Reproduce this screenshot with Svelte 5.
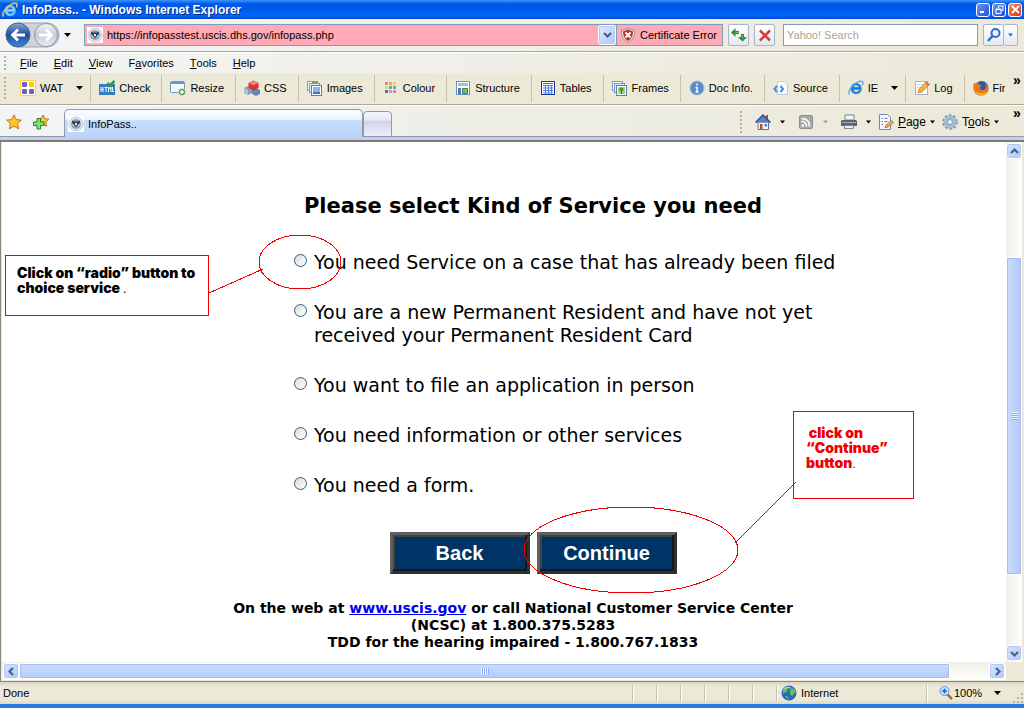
<script lang="ts">
    /* browser chrome */
    let address = $state('https://infopasstest.uscis.dhs.gov/infopass.php');
    let search = $state('');

    const menus = [
        ['', 'F', 'ile'],
        ['', 'E', 'dit'],
        ['', 'V', 'iew'],
        ['F', 'a', 'vorites'],
        ['', 'T', 'ools'],
        ['', 'H', 'elp'],
    ];

    const tools = [
        { icon: 'wat', label: 'WAT', drop: true },
        { icon: 'check', label: 'Check' },
        { icon: 'resize', label: 'Resize' },
        { icon: 'css', label: 'CSS' },
        { icon: 'images', label: 'Images' },
        { icon: 'colour', label: 'Colour' },
        { icon: 'structure', label: 'Structure' },
        { icon: 'tables', label: 'Tables' },
        { icon: 'frames', label: 'Frames' },
        { icon: 'info', label: 'Doc Info.' },
        { icon: 'source', label: 'Source' },
        { icon: 'ie', label: 'IE', drop: true },
        { icon: 'log', label: 'Log' },
        { icon: 'firefox', label: 'Fir' },
    ];

    const swatches = ['#f08080', '#f4a060', '#f0d060', '#c8e0a0', '#50c060', '#50b0e0', '#5070b0', '#d090d8', '#ff70a8'];

    /* service form */
    let service = $state('');

    const services = [
        { id: 'case', text: 'You need Service on a case that has already been filed' },
        { id: 'resident', text: 'You are a new Permanent Resident and have not yet received your Permanent Resident Card' },
        { id: 'person', text: 'You want to file an application in person' },
        { id: 'info', text: 'You need information or other services' },
        { id: 'form', text: 'You need a form.' },
    ];
</script>

{#snippet arrow()}
    <svg class="arrow" width="7" height="4" viewBox="0 0 7 4"><path d="M0 0h7L3.500 4z" fill="currentColor" /></svg>
{/snippet}

{#snippet chevron(turn: number)}
    <svg width="9" height="9" viewBox="0 0 9 9">
        <path d="M1 3l3.500 3.500L8 3" fill="none" stroke="#4d6185" stroke-width="2.200" transform="rotate({turn} 4.500 4.500)" />
    </svg>
{/snippet}

{#snippet icon(name: string)}
    <svg class="icon" width="16" height="16" viewBox="0 0 16 16">
        {#if name === 'wat'}
            <path d="M.5.5h15v15H.500z" fill="#fffdf0" stroke="#f4d24c" />
            <rect x="2" y="2" width="5" height="5" rx="1" fill="#7060c8" />
            <rect x="9" y="2" width="5" height="5" rx="1" fill="#ffcc00" />
            <rect x="2" y="9" width="5" height="5" rx="1" fill="#7060c8" />
            <rect x="9" y="9" width="5" height="5" rx="1" fill="#7060c8" />
        {:else if name === 'check'}
            <rect x="0" y="4" width="16" height="11" fill="#2f7fc4" />
            <path d="M2 7v5M2 9.500h2M4 7v5M5.500 7.500h3M7 7v5M9.500 12V7l1.200 2L12 7v5M13.500 7v4.500H15" fill="none" stroke="#fff" />
            <path d="M8.500 3l2.500 2.500L15.500 1" fill="none" stroke="#2e9a3a" stroke-width="2.500" />
        {:else if name === 'resize'}
            <rect x=".5" y="1.500" width="14" height="11" rx="1" fill="#f4f9ff" stroke="#7795b8" />
            <path d="M1 2h13v2H1z" fill="#5c9ade" />
            <circle cx="12" cy="12" r="3.500" fill="#4c9c3c" stroke="#fff" stroke-width=".5" />
            <path d="M10 12h4M12 10v4" stroke="#fff" stroke-width="1.300" />
        {:else if name === 'css'}
            <path d="M0 8l4-2 4 2v5l-4 2-4-2z" fill="#8c9cb0" />
            <path d="M8 10l4-2 4 2v4l-4 2-4-2z" fill="#6388b8" />
            <path d="M4.500 3L9.500.5l5 2.500v5L9.500 10.500 4.500 8z" fill="#d83038" />
            <path d="M4.500 3L9.500.5l5 2.500-5 2.500z" fill="#f08078" />
            <path d="M0 8l4 2v5l-4-2z" fill="#b4c0d0" />
        {:else if name === 'images' || name === 'frames'}
            <rect x=".5" y="1.500" width="10" height="9" fill="#f7fbff" stroke="#7b9bc2" />
            <rect x="2.500" y="3.500" width="10" height="9" fill="#dfeafa" stroke="#7b9bc2" />
            <rect x="4.500" y="5.500" width="10" height="10" fill="#fff" stroke="#5580b0" />
            <rect x="6" y="7" width="7" height="7" fill={name === 'images' ? '#8ab8ec' : '#a8d078'} />
            {#if name === 'images'}
                <path d="M5 2h5v1H5z" fill="#5ba34a" />
                <path d="M6 12h7v2H6z" fill="#3c78b8" />
            {:else}
                <circle cx="9.500" cy="9.500" r="2" fill="#3f9a2c" />
                <path d="M9 11h1v3H9z" fill="#70501c" />
            {/if}
        {:else if name === 'colour'}
            {#each swatches as fill, i}
                <rect x={2 + (i % 3) * 4} y={2 + Math.floor(i / 3) * 4} width="3" height="3" {fill} />
            {/each}
        {:else if name === 'structure'}
            <rect x="1.500" y="1.500" width="13" height="13" fill="#fff" stroke="#6a90c0" />
            <path d="M3 3h10v3H3z" fill="#9cc0e8" />
            <path d="M3 8h3v6H3z" fill="#4a78b8" />
            <path d="M7.500 8.500h5v5h-5z" fill="#70c060" stroke="#3a8838" />
        {:else if name === 'tables'}
            <rect x="1.500" y="1.500" width="13" height="13" fill="#fff" stroke="#1c3c98" />
            <path d="M3 3.500h10" stroke="#3c8c3c" />
            <path d="M3 5.500h10M3 8h10M3 10.500h10M3 13h10M5.500 5v8.500M8.500 5v8.500M11.500 5v8.500" stroke="#4f7de4" />
        {:else if name === 'info'}
            <circle cx="8" cy="8" r="7" fill="#5a8cc8" stroke="#a4bcd8" />
            <path d="M8 3.500v2M8 7v5.500M6.500 7.500H8M6.500 12h3" stroke="#fff" stroke-width="1.500" />
        {:else if name === 'source'}
            <path d="M4.500 1.500h7l3 3v10h-10z" fill="#f8fbff" stroke="#c0ccdc" />
            <path d="M4 6L1.500 9 4 12M7.500 6L10 9l-2.500 3" fill="none" stroke="#4290dc" stroke-width="2" />
        {:else if name === 'ie'}
            <path d="M13.500 9.500H5.500c.3 3 4 3.500 5.300 1h2.500C11 15.500 3 15 3 8.500 3 1.500 13.500 1.500 13.500 9.500zM5.600 7.300h5.200c-.3-3-4.900-3-5.200 0z" fill="#1a7fd8" stroke="#1a7fd8" stroke-width=".6" />
            <path d="M1.500 14.500C-1.500 10 10-.5 14.500 1.500c1 .7.600 2.300-.3 4" fill="none" stroke="#4aa6ec" stroke-width="1.300" />
        {:else if name === 'title'}
            <path d="M13.500 9.500H5.500c.3 3 4 3.500 5.300 1h2.500C11 15.500 3 15 3 8.500 3 1.500 13.500 1.500 13.500 9.500zM5.600 7.300h5.200c-.3-3-4.900-3-5.200 0z" fill="#7cd0ff" stroke="#7cd0ff" stroke-width=".6" />
            <path d="M1.500 14.500C-1.500 10 10-.5 14.500 1.500c1 .7.600 2.300-.3 4" fill="none" stroke="#f0c848" stroke-width="1.500" />
        {:else if name === 'log'}
            <path d="M1.500 1.500h12v13h-12z" fill="#fff" stroke="#a8b0b8" />
            <path d="M3 4.500h8M3 7.500h8" stroke="#d0d8e0" />
            <path d="M4 13l1-4 7.500-7.500 3 3L8 12z" fill="#f5b23c" stroke="#c07c20" stroke-width=".7" />
            <path d="M12.500 1.500l3 3-1.500 1.500-3-3z" fill="#e86c5c" />
        {:else if name === 'firefox'}
            <circle cx="8.500" cy="8" r="7" fill="#2c58a8" />
            <path d="M1 3c2 1 3-1 5-.5C4 4.500 8 5 9 6c-2 0-3 2-1 3.500 2 1.200 4 0 5-1.500 0-3-1-4.500-2-5.500 6 2.500 6 12-2 13C1 16-1 8 1 3z" fill="#e87818" />
            <path d="M2 10c2 4 8 5 12 1-2 5-10 6-12-1z" fill="#fbc03c" />
        {:else if name === 'seal'}
            <rect width="16" height="16" fill="#fff" />
            <circle cx="8" cy="8" r="7" fill="#dcdfe4" stroke="#c0c4cc" stroke-dasharray="2 1" />
            <circle cx="8" cy="8" r="4.800" fill="#7c9cb8" />
            <path d="M4 4.500l3 1.500 1-1 1 1 3-1.500v2L10 9.500 8 11 6 9.500 4 6.500z" fill="#2a4266" />
            <path d="M4.500 8l2 2.500M11.500 8l-2 2.500" stroke="#f0f4f8" />
            <path d="M7 7h2v2H7z" fill="#e4e8ee" />
            <path d="M7 9h2v1.500H7z" fill="#a05058" />
        {:else if name === 'shield'}
            <path d="M1.500 3Q5 3 8 .7 11 3 14.500 3C15 9 12 14 8 15.400 4 14 1 9 1.500 3z" fill="#e4e4e0" stroke="#98948c" />
            <path d="M3 4.300Q6 4 8 2.300 10 4 13 4.300C13 9 11 12.500 8 14 5 12.500 3 9 3 4.300z" fill="#c82c2c" />
            <path d="M5.500 5.500l5 5M10.500 5.500l-5 5" stroke="#fff" stroke-width="2" />
        {:else if name === 'refresh'}
            <path d="M0 5.500L4.500 1v3H8v3H4.500v3z" fill="#2c9238" />
            <path d="M16 10l-4.500 4.500L7 10h3V7h3v3z" fill="#2c8a38" />
            <path d="M4.500 5.500H8M11.500 8v4" fill="none" stroke="#68b868" />
        {:else if name === 'stop'}
            <path d="M3 3.500l10 10M13 3.500l-10 10" stroke="#d63c34" stroke-width="2.500" />
        {:else if name === 'find'}
            <circle cx="9.500" cy="6" r="4" fill="#e8f4ff" stroke="#2f6bd0" stroke-width="2" />
            <path d="M6.500 9L2 14" stroke="#2f6bd0" stroke-width="2.500" />
        {:else if name === 'star'}
            <path d="M8 .8l2.200 4.800 5.200.5-3.900 3.500 1.200 5.300L8 12.200l-4.700 2.700 1.200-5.300L.6 6.100l5.200-.5z" fill="#ffc42e" stroke="#bb7a18" />
        {:else if name === 'addstar'}
            <path d="M10 1l1.800 3.700 4 .5-3 2.800.8 4.200L10 10.200l-3.600 2L7 8 4.200 5.200l4-.5z" fill="#ffc42e" stroke="#bb7a18" />
            <path d="M4 4.500h3.500V8H11v3.500H7.500V15H4v-3.500H.5V8H4z" fill="#84e070" stroke="#258428" />
        {:else if name === 'home'}
            <path d="M11 1h2v5h-2z" fill="#b84838" />
            <path d="M3 8h10.500v7.500H3z" fill="#f4f6fa" stroke="#5c74a4" />
            <path d="M.5 8.500L8 1l7.500 7.500" fill="#5e7fb8" stroke="#34548c" stroke-width="1.500" />
            <path d="M5 10h2.500v5.500H5z" fill="#a05828" />
            <path d="M9.500 10h2.500v2.500H9.500z" fill="#4878c8" />
        {:else if name === 'feed'}
            <rect x="1.500" y="1.500" width="13" height="13" rx="1" fill="#a8a8a4" stroke="#8c8c88" />
            <circle cx="4.800" cy="11.500" r="1.300" fill="#fff" />
            <path d="M3.500 7.500q5 0 5 5M3.500 4.500q8 0 8 8" fill="none" stroke="#fff" stroke-width="1.500" />
        {:else if name === 'print'}
            <path d="M4 1h9v5H4z" fill="#f4f8fc" stroke="#7c8490" />
            <path d="M1 6h14l1 1v5H0V7z" fill="#5c626c" />
            <path d="M1 8h14v1H1z" fill="#a8b0b8" />
            <path d="M3.500 11.500h9v3h-9z" fill="#e4ecf8" stroke="#80889c" />
        {:else if name === 'page'}
            <path d="M1.500.5h8l3 3v12h-11z" fill="#f6f8fc" stroke="#7088b0" />
            <path d="M3.500 4.500H5M6.500 4.500h3M3.500 7.500H5M6.500 7.500h3M3.500 10.500H5" stroke="#6080b0" />
            <path d="M7 14l1-3 5.500-4.500 2 2L10 13z" fill="#f0ae50" stroke="#8c7440" stroke-width=".8" />
        {:else if name === 'gear'}
            <circle cx="8" cy="8" r="6.500" fill="none" stroke="#7895b8" stroke-width="2.500" stroke-dasharray="2.500 1.600" />
            <circle cx="8" cy="8" r="4.500" fill="none" stroke="#a4bcd8" stroke-width="3.500" />
            <circle cx="8" cy="8" r="2.500" fill="#f4f4ec" stroke="#7895b8" />
        {:else if name === 'globe'}
            <circle cx="8" cy="8" r="7.500" fill="#2c66c0" />
            <path d="M2 4c2-3 5-3 6-2 0 2-2 2-2 4s-3 1-4 3zM9 5c2-3 4-2 5.500 1 0 3-2 2-3 5-2 0-3-3-2.500-6zM4 11c2-1 3 1 4 3-2 0-3-1-4-3z" fill="#66c050" />
            <path d="M3 4q3-3 7-1" fill="none" stroke="#b4dcf8" />
        {:else if name === 'zoom'}
            <path d="M9 9l5 5" stroke="#9c7048" stroke-width="2.500" />
            <circle cx="6.500" cy="6" r="4.500" fill="#d4eaff" stroke="#6090c8" />
            <path d="M4 6h5M6.500 3.500v5" stroke="#1c64d0" stroke-width="1.600" />
        {/if}
    </svg>
{/snippet}

<div class="window">
    <header class="titlebar">
        {@render icon('title')}
        <span class="title">InfoPass.. - Windows Internet Explorer</span>
        <button class="winbtn" aria-label="Minimize">
            <svg width="9" height="9" viewBox="0 0 9 9"><path d="M1 7h4" stroke="#fff" stroke-width="2" /></svg>
        </button>
        <button class="winbtn" aria-label="Restore">
            <svg width="9" height="9" viewBox="0 0 9 9"><path d="M3.500 3V1H8v4.500H6M1 4h5v4.500H1zM1 4.500h5" fill="none" stroke="#fff" /></svg>
        </button>
        <button class="winbtn close" aria-label="Close">
            <svg width="9" height="9" viewBox="0 0 9 9"><path d="M1 1l7 7M8 1L1 8" stroke="#fff" stroke-width="1.800" /></svg>
        </button>
    </header>

    <div class="navbar">
        <button class="travel" aria-label="Back and forward">
            <svg width="55" height="28" viewBox="0 0 55 28">
                <defs>
                    <linearGradient id="back" x1="0" y1="0" x2="0" y2="1">
                        <stop offset="0" stop-color="#88a8d8" />
                        <stop offset=".5" stop-color="#1d4c9c" />
                        <stop offset="1" stop-color="#3c8ce0" />
                    </linearGradient>
                    <linearGradient id="fwd" x1="0" y1="0" x2="0" y2="1">
                        <stop offset="0" stop-color="#f4f6fa" />
                        <stop offset=".5" stop-color="#c4cad8" />
                        <stop offset="1" stop-color="#e8f0f8" />
                    </linearGradient>
                </defs>
                <rect x="1" y="2" width="53" height="24" rx="12" fill="#d0d4da" stroke="#a0a6b0" />
                <circle cx="13" cy="14" r="12" fill="url(#back)" stroke="#4c648c" />
                <circle cx="41" cy="14" r="11.500" fill="url(#fwd)" stroke="#8c96a8" />
                <path d="M20 14H8M13 8.500L7.500 14l5.500 5.500" fill="none" stroke="#fff" stroke-width="2.800" />
                <path d="M34 14h12M41 8.500l5.500 5.500-5.500 5.500" fill="none" stroke="#fff" stroke-width="2.800" />
            </svg>
        </button>
        {@render arrow()}
        <div class="address">
            {@render icon('seal')}
            <input aria-label="Address" bind:value={address} />
            <button class="drop" aria-label="Show addresses">{@render chevron(0)}</button>
        </div>
        <button class="cert">{@render icon('shield')} Certificate Error</button>
        <button class="square" aria-label="Refresh">{@render icon('refresh')}</button>
        <button class="square" aria-label="Stop">{@render icon('stop')}</button>
        <input class="search" placeholder="Yahoo! Search" aria-label="Search" bind:value={search} />
        <div class="findgroup">
            <button class="square" aria-label="Go">{@render icon('find')}</button>
            <button class="square narrow" aria-label="Search options">{@render arrow()}</button>
        </div>
    </div>

    <nav class="menubar">
        <i class="grip"></i>
        {#each menus as [before, key, after]}
            <button>{before}<u>{key}</u>{after}</button>
        {/each}
    </nav>

    <div class="toolbar">
        <i class="grip"></i>
        <div class="tools">
            {#each tools as tool}
                <button>
                    {@render icon(tool.icon)}
                    {tool.label}
                    {#if tool.drop}<span class="more">{@render arrow()}</span>{/if}
                </button>
            {/each}
        </div>
        <span class="overflow">»</span>
    </div>

    <div class="tabrow">
        <button class="fav" aria-label="Favorites Center">{@render icon('star')}</button>
        <button class="fav" aria-label="Add to Favorites">{@render icon('addstar')}</button>
        <button class="tab">{@render icon('seal')} InfoPass..</button>
        <button class="newtab" aria-label="New Tab"></button>
        <div class="commands">
            <i class="grip"></i>
            <button class="spaced" aria-label="Home">{@render icon('home')}{@render arrow()}</button>
            <button class="spaced off" aria-label="Feeds">{@render icon('feed')}{@render arrow()}</button>
            <button aria-label="Print">{@render icon('print')}{@render arrow()}</button>
            <button class="named">{@render icon('page')}<span><u>P</u>age</span>{@render arrow()}</button>
            <button class="named">{@render icon('gear')}<span>T<u>o</u>ols</span>{@render arrow()}</button>
        </div>
        <span class="overflow">»</span>
    </div>

    <div class="viewport">
        <main>
            <form>
                <h1>Please select Kind of Service you need</h1>
                <div class="services">
                    {#each services as s}
                        <label>
                            <input type="radio" name="service" value={s.id} bind:group={service} />
                            <span>{s.text}</span>
                        </label>
                    {/each}
                </div>
                <div class="actions">
                    <button type="button">Back</button>
                    <button type="button">Continue</button>
                </div>

                <!-- instructions drawn over the form -->
                <svg class="marks" width="912" height="519" viewBox="0 0 912 519">
                    <g fill="none" stroke="#f00000" shape-rendering="crispEdges">
                        <ellipse cx="295" cy="120" rx="41" ry="27" />
                        <path d="M204 151L258 127" />
                        <ellipse cx="626" cy="408" rx="107" ry="43" />
                        <path d="M730 401L791 340" stroke="#a02020" />
                    </g>
                </svg>
                <p class="note pick">Click on “radio” button to choice service <small>.</small></p>
                <p class="note go">&nbsp;click on “Continue” button<small>.</small></p>
            </form>
            <footer>
                On the web at <a href="#uscis">www.uscis.gov</a> or call National Customer Service Center (NCSC) at 1.800.375.5283<br />
                TDD for the hearing impaired - 1.800.767.1833
            </footer>
        </main>
        <div class="vscroll">
            <button aria-label="Scroll up">{@render chevron(180)}</button>
            <div class="track"><div class="thumb"><i></i></div></div>
            <button aria-label="Scroll down">{@render chevron(0)}</button>
        </div>
        <div class="hscroll">
            <button aria-label="Scroll left">{@render chevron(90)}</button>
            <div class="track"><div class="thumb"><i></i></div></div>
            <button aria-label="Scroll right">{@render chevron(270)}</button>
        </div>
    </div>

    <div class="status">
        <span class="done">Done</span>
        {#each Array(6) as _}
            <span class="pane"></span>
        {/each}
        <span class="zone">{@render icon('globe')} Internet</span>
        <button class="level">{@render icon('zoom')} 100% <span class="more">{@render arrow()}</span></button>
        <svg class="sizer" width="12" height="12" viewBox="0 0 12 12">
            <path d="M9 1h2v2H9zM5 5h2v2H5zM9 5h2v2H9zM1 9h2v2H1zM5 9h2v2H5zM9 9h2v2H9z" fill="#b8b4a0" />
        </svg>
    </div>
</div>

<style>
    :global(body) {
        margin: 0;
    }

    .window {
        display: flex;
        flex-direction: column;
        height: 100vh;
        overflow: hidden;
        box-sizing: border-box;
        border-bottom: 4px solid #2878e0;
        background: #ece9d8;
        color: #000;
        font: 11px/14px "Liberation Sans", Arial, sans-serif;
    }

    .window * {
        box-sizing: border-box;
    }

    button {
        display: flex;
        align-items: center;
        flex: none;
        padding: 0;
        border: 0;
        background: none;
        color: inherit;
        font: inherit;
        white-space: nowrap;
    }

    svg {
        display: block;
        flex: none;
    }

    /* title */
    .titlebar {
        display: flex;
        align-items: center;
        gap: 2px;
        flex: none;
        height: 19px;
        padding: 0 2px;
        background: linear-gradient(#3c94fc, #0058e8 20%, #0058e8 45%, #0068ff 80%, #0048d0);
    }

    .title {
        flex: 1;
        padding-left: 2px;
        color: #fff;
        font-size: 12px;
        font-weight: bold;
        text-shadow: 1px 1px #0a2878;
    }

    .winbtn {
        justify-content: center;
        width: 14px;
        height: 14px;
        border: 1px solid #fff;
        border-radius: 3px;
        background: linear-gradient(135deg, #6c94f0, #2050d0);
    }

    .close {
        background: linear-gradient(135deg, #f08868, #d03c18);
    }

    /* address row */
    .navbar {
        display: flex;
        align-items: center;
        flex: none;
        height: 34px;
        padding: 0 6px 2px 5px;
        border-bottom: 1px solid #fff;
        background: linear-gradient(90deg, #f3f4f6, #f0efe8 50%, #ece9d8);
        box-shadow: inset 0 -1px #aca899;
    }

    .navbar > .arrow {
        margin: 0 13px 0 4px;
    }

    .address {
        display: flex;
        align-items: center;
        flex: 1;
        height: 22px;
        padding: 0 1px 0 2px;
        border: 1px solid #7f9db9;
        background: #ffaab6;
    }

    .address input {
        flex: 1;
        min-width: 0;
        padding: 0 4px;
        border: 0;
        background: none;
        font: inherit;
    }

    .drop {
        justify-content: center;
        width: 16px;
        height: 18px;
        border: 1px solid #b8cbf4;
        border-radius: 2px;
        outline: 1px solid #fff;
        background: linear-gradient(135deg, #dce8ff, #b4c8f8);
    }

    .cert {
        gap: 4px;
        width: 106px;
        height: 22px;
        padding-left: 3px;
        border: 1px solid #7f9db9;
        border-left: 0;
        background: #ffaab6;
    }

    .square {
        justify-content: center;
        width: 21px;
        height: 22px;
        margin-left: 5px;
        border: 1px solid #a8b4c8;
        border-radius: 2px;
        background: linear-gradient(#fff, #e4e8f2);
    }

    .search {
        width: 195px;
        height: 22px;
        margin-left: 8px;
        padding: 0 3px;
        border: 1px solid #7f9db9;
        background: #fff;
        font: inherit;
    }

    .search::placeholder {
        color: #a8a490;
        opacity: 1;
    }

    .findgroup {
        display: flex;
    }

    .narrow {
        width: 14px;
        margin-left: 0;
        border-left: 0;
        color: #1c64c8;
    }

    .narrow .arrow {
        width: 5px;
    }

    /* menu and developer toolbar */
    .grip {
        flex: none;
        width: 2px;
        height: 14px;
        margin: 0 6px 0 4px;
        background: repeating-linear-gradient(#b4b09c 0 2px, transparent 2px 4px);
    }

    .menubar {
        display: flex;
        align-items: center;
        flex: none;
        height: 20px;
        background: linear-gradient(90deg, #f3f4f4, #ece9d8);
    }

    .menubar button {
        padding: 0 8px;
    }

    .toolbar {
        display: flex;
        align-items: center;
        flex: none;
        height: 33px;
        padding-bottom: 2px;
        border-bottom: 1px solid #fff;
        background: #ece9d8;
        box-shadow: inset 0 -1px #aca899;
    }

    .toolbar .grip {
        height: 22px;
    }

    .tools {
        display: flex;
        flex: 1;
        min-width: 0;
        overflow: hidden;
    }

    .tools button {
        gap: 4px;
        height: 27px;
        padding: 0 11px 0 8px;
        border-right: 1px solid #c5c2b0;
    }

    .tools button:last-child {
        border-right: 0;
    }

    .more {
        padding: 0 0 0 9px;
    }

    .tools .more {
        margin-right: -4px;
    }

    .overflow {
        align-self: flex-start;
        width: 19px;
        padding-left: 8px;
        font: bold 14px/14px "Liberation Sans", Arial, sans-serif;
    }

    /* tabs */
    .tabrow {
        display: flex;
        align-items: flex-end;
        flex: none;
        height: 36px;
        border-bottom: 2px solid #7c7a70;
        background: linear-gradient(90deg, #f3f4f6, #eeeee6 50%, #ece9d8);
        box-shadow: inset 0 -3px #c0d0f4, inset 0 -4px #9498a8;
        padding-bottom: 3px;
    }

    .fav {
        height: 31px;
        padding-left: 6px;
        margin-right: 5px;
    }

    .tab {
        flex: 0 1 299px;
        gap: 4px;
        height: 28px;
        margin-left: 10px;
        padding-left: 3px;
        border: 1px solid #8c98b0;
        border-bottom: 0;
        border-radius: 5px 5px 0 0;
        background: linear-gradient(#fbfdff, #e8f4ff 35%, #c4e0fc 38%, #bcd4f8);
    }

    .newtab {
        width: 29px;
        height: 26px;
        border: 1px solid #9498a8;
        border-radius: 4px 4px 0 0;
        background: linear-gradient(#f4f4fa, #e4e6f2 35%, #d0d4e8 38%, #eceefa);
    }

    .commands {
        display: flex;
        align-items: center;
        gap: 7px;
        height: 31px;
        margin-left: auto;
    }

    .commands .grip {
        height: 22px;
        margin: 0 6px 0 0;
    }

    .commands button {
        gap: 9px;
    }

    .commands .spaced {
        padding-right: 6px;
    }

    .commands .named {
        gap: 4px;
        font-size: 12px;
    }

    .commands .arrow {
        width: 5px;
    }

    .off .arrow {
        opacity: 0.3;
    }

    .tabrow .overflow {
        margin-left: 6px;
    }

    /* document */
    .viewport {
        display: grid;
        grid-template: minmax(0, 1fr) 18px / minmax(0, 1fr) 16px;
        flex: 1;
        min-height: 0;
        padding: 0 2px 1px 1px;
        border-left: 1px solid #8c8978;
    }

    main {
        display: flex;
        flex-direction: column;
        align-items: center;
        overflow: hidden;
        padding: 53px 0 0 58px;
        background: #fff;
        font-family: "DejaVu Sans", Verdana, sans-serif;
    }

    form {
        position: relative;
        width: 630px;
        max-width: 100%;
    }

    h1 {
        margin: 0 0 33px;
        font-size: 21px;
        line-height: 23px;
        text-align: center;
    }

    .services {
        display: flex;
        flex-direction: column;
        gap: 27px;
        padding-left: 76px;
        font-size: 19px;
        line-height: 23px;
    }

    .services label {
        display: flex;
        align-items: flex-start;
        gap: 7px;
    }

    .services input {
        appearance: none;
        flex: none;
        width: 13px;
        height: 13px;
        margin: 3px 0;
        border: 1px solid #305c84;
        border-radius: 50%;
        background: linear-gradient(135deg, #dcdcd4, #fff);
    }

    .services input:checked {
        background: radial-gradient(#30a030 35%, #fff 40%);
    }

    .actions {
        display: flex;
        justify-content: center;
        gap: 7px;
        margin: 35px 0 26px;
    }

    .actions button {
        justify-content: center;
        width: 140px;
        height: 42px;
        border: 3px solid;
        border-color: #606060 #303030 #303030 #606060;
        background: #003366;
        box-shadow: inset -2px -2px #181818, inset 2px 2px #404040;
        color: #fff;
        font: bold 20px/23px "Liberation Sans", Arial, sans-serif;
    }

    .marks {
        position: absolute;
        top: -53px;
        left: -213px;
        pointer-events: none;
        overflow: visible;
    }

    .note {
        position: absolute;
        margin: 0;
        border: 1px solid #f00000;
        font: 900 14px/15px Inter, "Liberation Sans", sans-serif;
    }

    .note small {
        font-weight: 400;
    }

    .pick {
        top: 60px;
        left: -213px;
        width: 204px;
        height: 61px;
        padding: 9px 4px 0 11px;
        background: #fff;
    }

    .go {
        top: 216px;
        left: 575px;
        width: 121px;
        height: 88px;
        padding: 13px 16px 0 12px;
        color: #f00000;
    }

    footer {
        max-width: 570px;
        margin-right: 40px;
        font-size: 14px;
        font-weight: bold;
        line-height: 17px;
        text-align: center;
    }

    footer a {
        color: #0000ee;
    }

    /* scroll bars */
    .vscroll,
    .hscroll {
        display: flex;
        background: linear-gradient(90deg, #f0efe8, #fefefc);
    }

    .vscroll {
        flex-direction: column;
        padding: 1px 0;
    }

    .hscroll {
        padding: 1px;
        background: linear-gradient(#f0efe8, #fefefc);
    }

    .vscroll button,
    .hscroll button {
        justify-content: center;
        width: 16px;
        height: 16px;
        border: 1px solid #fff;
        border-radius: 3px;
        background: linear-gradient(135deg, #d8e4ff, #b0c8fc);
        box-shadow: inset 0 0 0 1px #b4c8f4;
    }

    .track {
        display: flex;
        flex: 1;
    }

    .vscroll .track {
        flex-direction: column;
        padding-top: 98px;
    }

    .thumb {
        display: flex;
        align-items: center;
        justify-content: center;
        border: 1px solid #fff;
        border-radius: 2px;
        box-shadow: inset 0 0 0 1px #a8bcf0;
    }

    .vscroll .thumb {
        height: 82%;
        background: linear-gradient(90deg, #ccdcff, #b4c8fa);
    }

    .hscroll .thumb {
        width: 96%;
        background: linear-gradient(#ccdcff, #b4ccfc);
    }

    .vscroll i {
        width: 7px;
        height: 8px;
        background: repeating-linear-gradient(#eef4fe 0 1px, #8cb0f8 1px 2px);
    }

    .hscroll i {
        width: 8px;
        height: 7px;
        background: repeating-linear-gradient(90deg, #eef4fe 0 1px, #8cb0f8 1px 2px);
    }

    /* status */
    .status {
        display: flex;
        align-items: center;
        flex: none;
        height: 23px;
        border-top: 1px solid #8c8978;
        background: linear-gradient(#d8d4c4, #ece9d8 20%, #ece9d8 80%, #dcd8c0);
    }

    .done {
        flex: 1;
        padding-left: 3px;
    }

    .pane,
    .zone,
    .level {
        display: flex;
        align-items: center;
        height: 17px;
        border-left: 1px solid #c5c2b0;
        box-shadow: inset 1px 0 #fff;
    }

    .pane {
        width: 24px;
    }

    .zone {
        gap: 4px;
        width: 150px;
        padding-left: 4px;
    }

    .level {
        width: 86px;
        padding-left: 11px;
    }

    .level .more {
        padding-left: 12px;
    }

    .sizer {
        align-self: flex-end;
    }
</style>
